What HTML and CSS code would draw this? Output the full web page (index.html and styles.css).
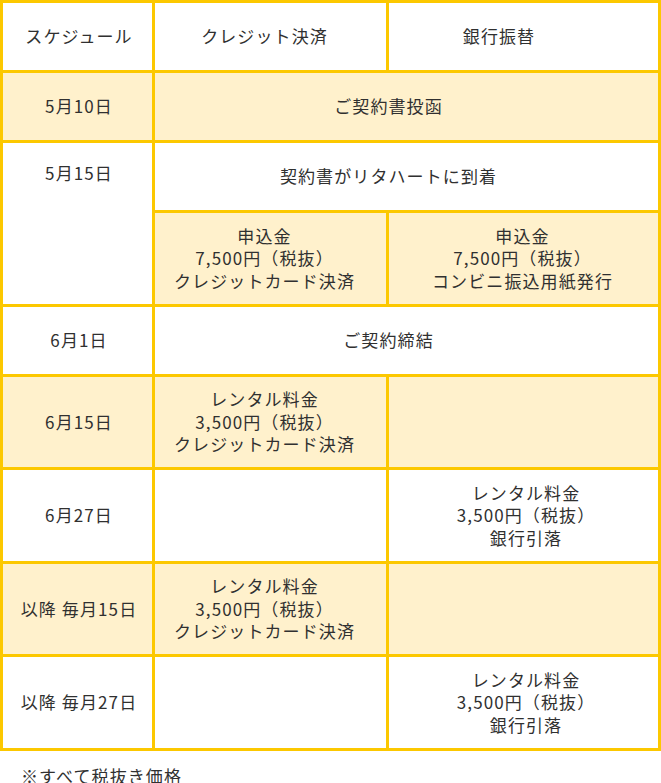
FILE: index.html
```html
<!DOCTYPE html>
<html lang="ja">
<head>
<meta charset="utf-8">
<title>スケジュール</title>
<link rel="stylesheet" href="styles.css">
</head>
<body>
<table class="schedule">
  <colgroup>
    <col class="c1">
    <col class="c2">
    <col class="c3">
  </colgroup>
  <tr class="single">
    <td class="date">スケジュール</td>
    <td class="credit">クレジット決済</td>
    <td class="bank-head">銀行振替</td>
  </tr>
  <tr class="single fill">
    <td class="date">5月10日</td>
    <td colspan="2" class="wide">ご契約書投函</td>
  </tr>
  <tr class="single">
    <td rowspan="2" class="date top">5月15日</td>
    <td colspan="2" class="wide">契約書がリタハートに到着</td>
  </tr>
  <tr class="fill">
    <td class="credit">申込金<br>7,500円（税抜）<br>クレジットカード決済</td>
    <td class="bank fee">申込金<br>7,500円（税抜）<br>コンビニ振込用紙発行</td>
  </tr>
  <tr class="single">
    <td class="date">6月1日</td>
    <td colspan="2" class="wide">ご契約締結</td>
  </tr>
  <tr class="fill">
    <td class="date">6月15日</td>
    <td class="credit">レンタル料金<br>3,500円（税抜）<br>クレジットカード決済</td>
    <td class="bank"></td>
  </tr>
  <tr>
    <td class="date">6月27日</td>
    <td class="credit"></td>
    <td class="bank">レンタル料金<br>3,500円（税抜）<br>銀行引落</td>
  </tr>
  <tr class="fill">
    <td class="date">以降 毎月15日</td>
    <td class="credit">レンタル料金<br>3,500円（税抜）<br>クレジットカード決済</td>
    <td class="bank"></td>
  </tr>
  <tr>
    <td class="date">以降 毎月27日</td>
    <td class="credit"></td>
    <td class="bank">レンタル料金<br>3,500円（税抜）<br>銀行引落</td>
  </tr>
</table>
<p class="note">※すべて税抜き価格</p>
</body>
</html>
```
FILE: styles.css
```css
html, body {
  margin: 0;
  padding: 0;
  background: #ffffff;
}
body {
  font-family: "Noto Sans CJK JP", "Noto Sans", sans-serif;
  font-size: 17px;
  line-height: 22.5px;
  letter-spacing: 1.1px;
  color: #303030;
}
.schedule {
  width: 661px;
  table-layout: fixed;
  border-collapse: separate;
  border-spacing: 0;
  border-top: 3px solid #fcc800;
  border-left: 3px solid #fcc800;
}
.c1 { width: 152px; }
.c2 { width: 234px; }
.c3 { width: 272px; }
.schedule td {
  box-sizing: border-box;
  border-right: 3px solid #fcc800;
  border-bottom: 3px solid #fcc800;
  padding: 11.5px 4px;
  text-align: center;
  vertical-align: middle;
  background: #ffffff;
}
.schedule td.date {
  padding-left: 6px;
  padding-right: 3px;
}
.schedule td.credit {
  padding-left: 4px;
  padding-right: 16px;
}
.schedule td.bank {
  padding-left: 9px;
  padding-right: 4px;
}
.schedule td.bank.fee {
  padding-left: 4px;
  padding-right: 6px;
}
.schedule td.bank-head {
  padding-left: 4px;
  padding-right: 53px;
}
.schedule td.wide {
  padding-left: 4px;
  padding-right: 40px;
}
.schedule .single td {
  height: 70px;
}
.schedule .fill td {
  background: #fff1cc;
}
.schedule td.top {
  vertical-align: top;
  padding-top: 19px;
  background: #ffffff;
}
.note {
  margin: 14px 0 0;
  padding-left: 21px;
}
```
